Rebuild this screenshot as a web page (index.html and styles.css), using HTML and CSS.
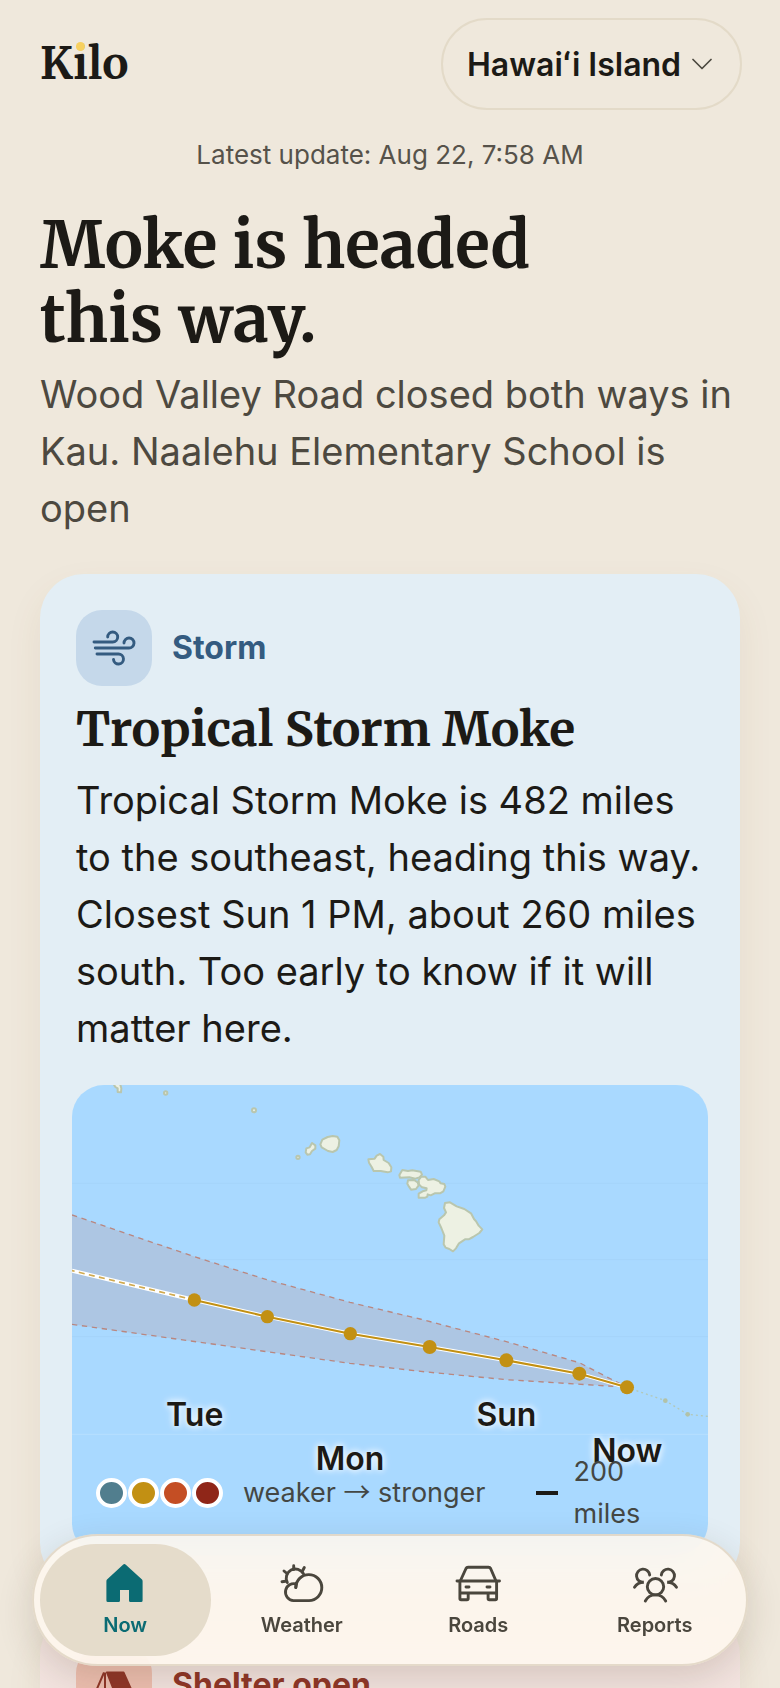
FILE: index.html
```html
<!DOCTYPE html>
<html lang="en">
<head>
	<meta charset="UTF-8">
	<meta name="viewport" content="width=device-width, initial-scale=1">
	<title>Kilo</title>
	<link rel="stylesheet" href="styles.css">
</head>
<body>
<div class="app">
	<header class="topbar">
		<div class="logo">K<span class="logo-i">i</span>lo</div>
		<label class="picker">
			<select class="picker-select" aria-label="Island">
				<option>Hawaiʻi Island</option>
			</select>
			<svg class="picker-arrow" viewBox="0 0 20 12" fill="none" stroke="currentColor" stroke-width="1.7" stroke-linecap="round" stroke-linejoin="round"><path d="M1 1.5 10 10.5 19 1.5"/></svg>
		</label>
	</header>

	<main class="content">
		<p class="updated">Latest update: Aug 22, 7:58 AM</p>
		<h1 class="headline">Moke is headed this way.</h1>
		<p class="summary">Wood Valley Road closed both ways in Kau. Naalehu Elementary School is open</p>

		<section class="card storm">
			<div class="card-head">
				<span class="tile">
					<svg class="icon" viewBox="0 0 44 44" fill="none" stroke="currentColor" stroke-width="2.9" stroke-linecap="round">
						<path d="M2 16H20.7A5 5 0 1 0 15.7 11"/>
						<path d="M3.3 22H36.7A5 5 0 1 0 32 17"/>
						<path d="M5 28H26.3A5 5 0 1 1 21.5 33.5"/>
					</svg>
				</span>
				<span class="card-kind">Storm</span>
			</div>
			<h2 class="card-title">Tropical Storm Moke</h2>
			<p class="card-text">Tropical Storm Moke is 482 miles to the southeast, heading this way. Closest Sun 1 PM, about 260 miles south. Too early to know if it will matter here.</p>

			<div class="map">
				<svg class="map-art" viewBox="36 48 1908 1410">
					<g stroke="#a4d4fa" stroke-width="3">
						<path d="M36 343H1944M36 572H1944M36 803H1944"/>
						<path d="M36 1096H1944" stroke="#b6dfff"/>
					</g>
					<!-- islands -->
					<g fill="#edf1e3" stroke="#b9c6ae" stroke-width="6" stroke-linejoin="round">
						<path d="M160 44 166 54 173 58 173 69 183 70 184 58 180 44Z"/>
						<circle cx="317" cy="72" r="5"/>
						<circle cx="582" cy="124" r="6"/>
						<circle cx="714" cy="265" r="5"/>
						<path d="M756 222 766 229 766 239 756 246 750 256 742 257 737 250 739 238 749 235Z"/>
						<path d="M803 204 818 201 832 203 838 214 836 232 830 243 818 249 804 246 785 235 781 226 787 212Z"/>
						<path d="M925 271 944 269 950 260 960 255 970 263 971 273 986 282 994 295 993 307 983 310 962 306 941 306 935 294 927 281Z"/>
						<path d="M1027 303 1044 306 1057 304 1082 308 1086 317 1078 325 1066 329 1048 325 1020 326 1018 318Z"/>
						<path d="M1044 334 1062 333 1073 340 1076 349 1068 360 1053 362 1047 353 1042 344Z"/>
						<path d="M1084 323 1096 323 1104 333 1121 330 1138 337 1142 343 1153 345 1156 353 1150 367 1140 373 1124 373 1112 379 1103 376 1102 383 1096 386 1076 386 1076 374 1088 367 1099 364 1100 358 1086 355 1077 346 1076 333Z"/>
						<path d="M1155 402 1170 400 1190 412 1213 420 1233 433 1242 450 1249 458 1256 470 1267 481 1258 492 1239 504 1226 511 1215 511 1197 523 1188 538 1179 547 1168 540 1157 536 1151 526 1153 500 1144 477 1136 460 1138 451 1152 439 1158 430 1152 417Z"/>
					</g>
					<!-- forecast cone -->
					<path d="M36 438 400 562 620 632 870 700 1080 750 1339 818 1558 881 1701 955 1660 952 1339 932 1100 909 870 883 150 782 36 766Z" fill="#adc6e3"/>
					<g fill="none" stroke="#b98780" stroke-width="4" stroke-dasharray="16 14">
						<path d="M36 438 400 562 620 632 870 700 1080 750 1339 818 1558 881 1701 955"/>
						<path d="M36 766 150 782 870 883 1100 909 1339 932 1660 952"/>
					</g>
					<!-- track -->
					<path d="M1701 955 1816 995 1883 1036 1944 1042" fill="none" stroke="#b2c8b9" stroke-width="4" stroke-dasharray="6 9"/>
					<circle cx="1816" cy="995" r="7" fill="#b2c2a8"/>
					<circle cx="1883" cy="1036" r="7" fill="#b2c2a8"/>
					<path d="M36 605 403 693 622 743 871 794 1109 834 1339 874 1558 914 1701 955" fill="none" stroke="#fff" stroke-width="12"/>
					<path d="M36 605 403 693" stroke="#d0a94e" stroke-width="5" stroke-dasharray="18 13" stroke-dashoffset="10"/>
					<path d="M403 693 622 743 871 794 1109 834 1339 874 1558 914 1701 955" fill="none" stroke="#c29013" stroke-width="6"/>
					<g fill="#c29013">
						<circle cx="403" cy="693" r="20"/>
						<circle cx="622" cy="743" r="20"/>
						<circle cx="871" cy="794" r="20"/>
						<circle cx="1109" cy="834" r="21"/>
						<circle cx="1339" cy="874" r="21"/>
						<circle cx="1558" cy="914" r="21"/>
						<circle cx="1701" cy="955" r="21"/>
					</g>
				</svg>
				<span class="day tue">Tue</span>
				<span class="day mon">Mon</span>
				<span class="day sun">Sun</span>
				<span class="day now">Now</span>
				<div class="legend">
					<div class="levels">
						<i class="level low"></i><i class="level mid"></i><i class="level high"></i><i class="level top"></i>
					</div>
					<span class="legend-text">weaker <span class="arrow">→</span> stronger</span>
					<div class="scale"><i class="scale-bar"></i><span class="scale-text">200 miles</span></div>
				</div>
			</div>
		</section>

		<section class="card shelter">
			<div class="card-head">
				<span class="tile">
					<svg class="icon" viewBox="0 0 44 44" fill="currentColor" stroke="currentColor" stroke-width="2" stroke-linejoin="round">
						<path d="M15 9.5H31.5L43 35H25Z"/>
						<path d="M12 9.5 1 35M13 9.5V35M1 35H25" fill="none"/>
					</svg>
				</span>
				<span class="card-kind">Shelter open</span>
			</div>
		</section>
	</main>

	<nav class="tabs">
		<a class="tab active" href="#now">
			<svg class="icon" viewBox="0 0 44 44" fill="currentColor"><path d="M20 2.8a2 2 0 0 1 2.8 0L39 17.6q.6.6.6 1.6V38.5a1.5 1.5 0 0 1-1.5 1.5H27.5a1.5 1.5 0 0 1-1.5-1.5V28H17v10.5a1.5 1.5 0 0 1-1.5 1.5H4.9a1.5 1.5 0 0 1-1.5-1.5V19.2q0-1 .6-1.6z"/></svg>
			Now
		</a>
		<a class="tab" href="#weather">
			<svg class="icon" viewBox="0 0 44 44" fill="none" stroke="currentColor" stroke-width="2.9" stroke-linecap="round">
				<path d="M15.8 25.5A13 13 0 1 1 29 38.6H13.5A8.5 8.5 0 1 1 16.5 22"/>
				<path d="M7.3 20.5A9 9 0 0 1 23.5 11.8"/>
				<path d="M13.7 3.7V7.5M4 9 7 11.5M2 19.7 5.5 19.3M24.3 5.5 22.5 9M16.3 22 15.8 25.5"/>
			</svg>
			Weather
		</a>
		<a class="tab" href="#roads">
			<svg class="icon" viewBox="0 0 44 44" fill="none" stroke="currentColor" stroke-width="2.9" stroke-linecap="round" stroke-linejoin="round">
				<path d="M4.5 18.5 10 6.5Q10.6 5.3 12 5.3H32.5Q34 5.3 34.6 6.5L39.8 18.5"/>
				<path d="M1 19H43.5M3.9 19V36.5Q3.9 37.7 5.1 37.7H11Q12.2 37.7 12.2 36.5V31M40.6 19V36.5Q40.6 37.7 39.4 37.7H33.3Q32.1 37.7 32.1 36.5V31M3.9 31H40.6M10 25H13M31 25H34"/>
			</svg>
			Roads
		</a>
		<a class="tab" href="#reports">
			<svg class="icon" viewBox="0 0 44 44" fill="none" stroke="currentColor" stroke-width="2.9" stroke-linecap="round">
				<circle cx="22.5" cy="24.7" r="8.2"/>
				<path d="M12.3 39Q15.5 32.9 22.5 32.9T32.7 39"/>
				<path d="M16.7 13A6.6 6.6 0 1 0 10.8 20.3Q4.5 20.3 1.5 25.3"/>
				<path d="M28.3 13A6.6 6.6 0 1 1 34.2 20.3Q40.5 20.3 43.5 25.3"/>
			</svg>
			Reports
		</a>
	</nav>
</div>
</body>
</html>
```
FILE: styles.css
```css
*{
	box-sizing: border-box;
}
body{
	margin: 0;
	background: #efe8dc;
	color: #1c1a16;
	font-family: Inter, "Liberation Sans", sans-serif;
}
h1,h2,p{
	margin: 0;
}
.app{
	height: 100vh;
	overflow-y: auto;
	scrollbar-width: none;
}

/* header */
.topbar{
	display: flex;
	align-items: center;
	justify-content: space-between;
	padding: 18px 38px 0 40px;
}
.logo{
	font: bold 44px/60px Merriweather, "Liberation Serif", serif;
}
.logo-i{
	position: relative;
}
.logo-i::after{
	content: "";
	position: absolute;
	left: 3px;
	top: 6px;
	width: 9px;
	height: 9px;
	border-radius: 50%;
	background: #f7d060;
}
.picker{
	display: flex;
	align-items: center;
	gap: 10px;
	height: 92px;
	padding: 0 28px 0 24px;
	border: 2px solid #e3dac8;
	border-radius: 46px;
}
.picker-select{
	appearance: none;
	padding: 2px 0 0;
	border: 0;
	background: none;
	color: inherit;
	font: 600 32px/40px Inter, "Liberation Sans", sans-serif;
}
.picker-arrow{
	width: 20px;
	height: 12px;
	color: #4d4940;
}

.content{
	padding: 28px 40px 180px;
}
.updated{
	color: #56524a;
	font-size: 26px;
	line-height: 34px;
	text-align: center;
}
.headline{
	margin-top: 36px;
	font: bold 64px/74px Merriweather, "Liberation Serif", serif;
	text-wrap: balance;
}
.summary{
	margin-top: 10px;
	color: #4d4940;
	font-size: 38px;
	line-height: 57px;
}

/* cards */
.card{
	padding: 36px 36px 32px;
	border-radius: 44px;
	box-shadow: 0 16px 36px rgba(130, 90, 40, .08);
}
.storm{
	margin-top: 37px;
	background: #e3eef5;
}
.shelter{
	margin-top: 24px;
	background: #f3e4e0;
}
.card-head{
	display: flex;
	align-items: center;
	gap: 20px;
	font-size: 32px;
	font-weight: 700;
	line-height: 40px;
}
.tile{
	display: grid;
	place-items: center;
	width: 76px;
	height: 76px;
	border-radius: 26px;
}
.icon{
	display: block;
	width: 44px;
	height: 44px;
	overflow: visible;
}
.storm .card-head{
	color: #345b80;
}
.storm .tile{
	background: #c5d8ea;
}
.shelter .card-head{
	color: #8f3628;
}
.shelter .tile{
	background: #edbfb0;
}
.card-title{
	margin-top: 12px;
	font: bold 48px/62px Merriweather, "Liberation Serif", serif;
}
.card-text{
	margin-top: 12px;
	font-size: 38px;
	line-height: 57px;
}

/* storm map */
.map{
	position: relative;
	margin: 28px -4px 0;
	border-radius: 32px;
	overflow: hidden;
	background: #a9d9ff;
}
.map-art{
	display: block;
	width: 100%;
	height: auto;
}
.day{
	position: absolute;
	transform: translateX(-50%);
	font-size: 32px;
	font-weight: 600;
	line-height: 40px;
	text-shadow: 0 0 6px #fff, 0 0 10px rgba(255, 255, 255, .7);
}
.tue{
	left: 19.3%;
	top: 66%;
}
.mon{
	left: 43.7%;
	top: 75.3%;
}
.sun{
	left: 68.3%;
	top: 66%;
}
.now{
	left: 87.3%;
	top: 73.6%;
}
.legend{
	position: absolute;
	left: 24px;
	right: 24px;
	bottom: 20px;
	display: flex;
	align-items: center;
	color: #444744;
	font-size: 27px;
	line-height: 42px;
}
.levels{
	display: flex;
	gap: 1px;
}
.level{
	width: 31px;
	height: 30px;
	border: 4px solid #fff;
	border-radius: 50%;
}
.low{
	background: #517e8e;
}
.mid{
	background: #c29013;
}
.high{
	background: #c44e24;
}
.top{
	background: #8f2618;
}
.legend-text{
	margin-left: 20px;
	white-space: nowrap;
}
.arrow{
	font-family: "Noto Sans CJK JP", sans-serif;
	line-height: 1;
}
.scale{
	display: flex;
	align-items: center;
	gap: 16px;
	margin-left: 50px;
}
.scale-bar{
	width: 22px;
	height: 4px;
	background: #1c1a16;
}
.scale-text{
	width: 80px;
}

/* bottom tabs */
.tabs{
	position: fixed;
	left: 32px;
	right: 32px;
	bottom: 22px;
	display: grid;
	grid-template-columns: repeat(4, 1fr);
	gap: 6px;
	padding: 8px 6px;
	border: 2px solid rgba(205, 192, 168, .5);
	border-radius: 66px;
	background: rgba(254, 247, 238, .88);
	backdrop-filter: blur(20px);
	box-shadow: 0 12px 36px rgba(60, 45, 20, .16);
}
.tab{
	display: flex;
	flex-direction: column;
	align-items: center;
	justify-content: center;
	gap: 6px;
	height: 112px;
	border-radius: 56px;
	color: #4a463d;
	font-size: 20px;
	font-weight: 600;
	line-height: 26px;
	text-decoration: none;
}
.active{
	background: #e5dccb;
	color: #0b6b73;
}
```
